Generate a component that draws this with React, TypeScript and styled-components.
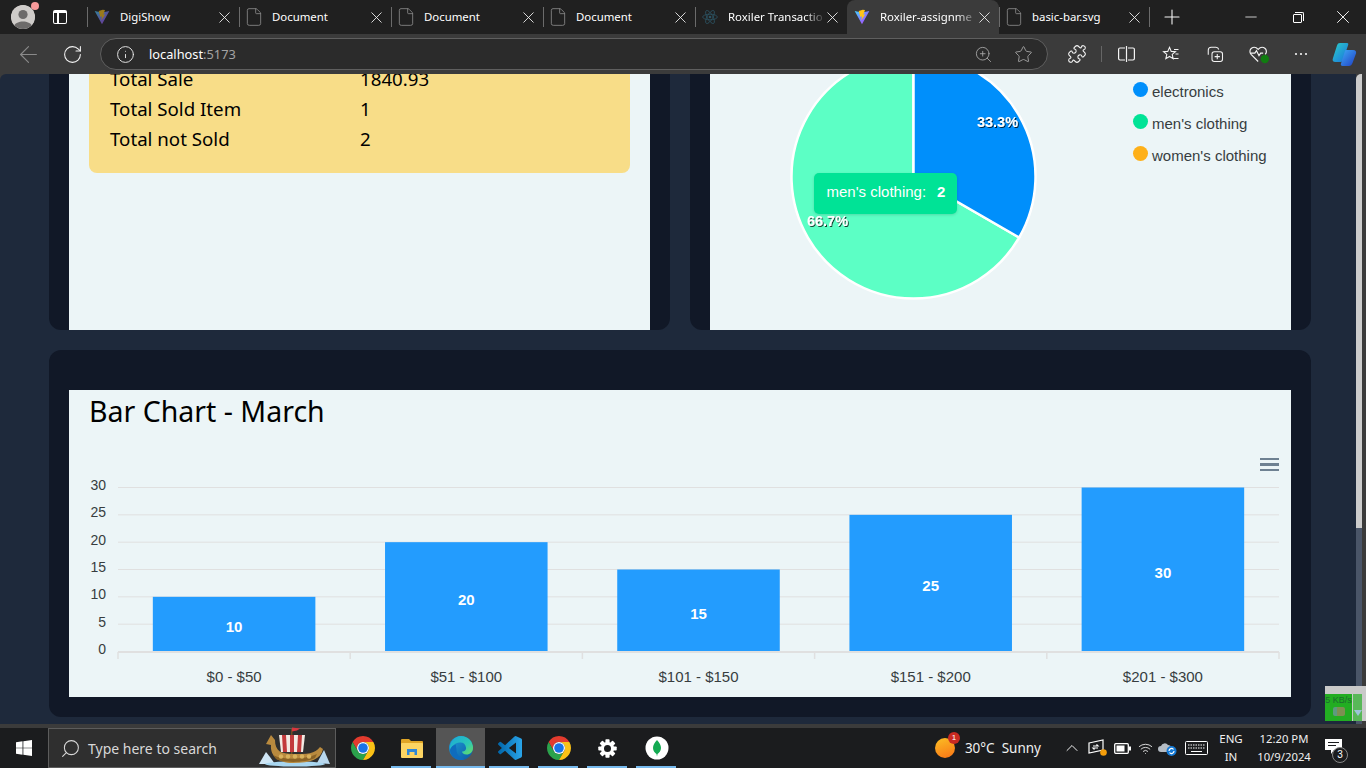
import React from "react";
import styled, { createGlobalStyle } from "styled-components";
import {
  ArrowLeft,
  ChevronUp,
  File,
  Info,
  Minus,
  Plus,
  Puzzle,
  RotateCw,
  Search,
  Star,
  Wifi,
  X,
  ZoomIn,
} from "lucide-react";

const UI_FONT = `"Noto Sans", "Open Sans", sans-serif`;
const CHART_FONT = `"Liberation Sans", Arial, sans-serif`;

const GlobalStyle = createGlobalStyle`
  html, body {
    margin: 0;
    height: 100%;
    overflow: hidden;
    background: #3b3b3b;
  }
  * { box-sizing: border-box; }
`;

const Screen = styled.div`
  position: relative;
  width: 1366px;
  height: 768px;
  display: flex;
  flex-direction: column;
  overflow: hidden;
  font-family: ${UI_FONT};
`;

/* ---- browser chrome ---- */

const TabStrip = styled.div`
  height: 34px;
  display: flex;
  align-items: center;
  background: #202020;
  color: #fff;
`;

const Avatar = styled.div`
  position: relative;
  width: 24px;
  height: 24px;
  margin-left: 11px;
  border-radius: 50%;
  background: #c9c6c3;
  overflow: visible;

  svg {
    display: block;
    border-radius: 50%;
  }
`;

const AvatarDot = styled.span`
  position: absolute;
  top: -3px;
  right: -4px;
  width: 8px;
  height: 8px;
  border-radius: 50%;
  background: #f79a9a;
`;

const VerticalTabsIcon = styled.div`
  width: 14px;
  height: 14px;
  margin-left: 18px;
  margin-right: 20px;
  border: 1.5px solid #fff;
  border-radius: 2px;
  border-top-width: 3px;
  position: relative;

  &::after {
    content: "";
    position: absolute;
    left: 3px;
    top: 0;
    bottom: 0;
    width: 1.5px;
    background: #fff;
  }
`;

const Tab = styled.div<{ $active?: boolean; $width?: number }>`
  position: relative;
  width: ${(p) => p.$width ?? 152}px;
  height: 34px;
  flex: none;
  display: flex;
  align-items: center;
  padding: 0 8px 0 7px;
  background: ${(p) => (p.$active ? "#3b3b3b" : "transparent")};
  border-radius: ${(p) => (p.$active ? "8px 8px 0 0" : "0")};

  &::before {
    content: "";
    display: ${(p) => (p.$active ? "none" : "block")};
    position: absolute;
    left: 0;
    top: 7px;
    bottom: 7px;
    width: 1px;
    background: #6b6b6b;
  }
`;

const Favicon = styled.div`
  width: 16px;
  height: 16px;
  flex: none;
  display: flex;
  align-items: center;
  justify-content: center;
  color: #8c8c8c;

  svg {
    flex: none;
  }
`;

const TabTitle = styled.span<{ $fade?: boolean }>`
  flex: 1;
  margin-left: 10px;
  min-width: 0;
  font-size: 11.4px;
  line-height: 16px;
  white-space: nowrap;
  color: #fff;
  ${(p) =>
    p.$fade &&
    "mask-image: linear-gradient(to right, #000 78%, transparent 100%);"}
`;

const TabClose = styled(X)`
  flex: none;
  margin: 0 -3px;
  color: #f2f2f2;
`;

const NewTabDivider = styled.div`
  width: 1px;
  height: 20px;
  background: #6b6b6b;
`;

const WindowControls = styled.div`
  margin-left: auto;
  display: flex;
  align-items: center;
`;

const WindowControl = styled.div`
  width: 46px;
  display: flex;
  align-items: center;
  justify-content: center;
`;

const RestoreIcon = styled.div`
  position: relative;
  width: 9px;
  height: 9px;
  border: 1px solid #fff;
  border-radius: 1px;
  margin-top: 2px;

  &::after {
    content: "";
    position: absolute;
    top: -3px;
    right: -3px;
    width: 8px;
    height: 8px;
    border-top: 1px solid #fff;
    border-right: 1px solid #fff;
    border-radius: 0 2px 0 0;
  }
`;

const Toolbar = styled.div`
  height: 40px;
  display: flex;
  align-items: center;
  background: #3b3b3b;
  color: #fff;
`;

const ToolButton = styled.div<{ $width: number; $dim?: boolean }>`
  width: ${(p) => p.$width}px;
  flex: none;
  display: flex;
  align-items: center;
  justify-content: center;
  color: ${(p) => (p.$dim ? "#8a8a8a" : "#f4f4f4")};
`;

const AddressBar = styled.div`
  width: 948px;
  height: 32px;
  flex: none;
  display: flex;
  align-items: center;
  margin: 0 8px 0 12px;
  padding: 0 14px 0 15px;
  border: 1px solid #5f5f5f;
  border-radius: 16px;
  background: #2b2b2b;
  color: #e8e8e8;
`;

const Host = styled.span`
  margin-left: 14px;
  font-size: 12.8px;
  color: #fff;
`;

const Port = styled.span`
  color: #a3a3a3;
`;

const AddressActions = styled.div`
  margin-left: auto;
  display: flex;
  align-items: center;
  gap: 21px;
  color: #a8a8a8;
`;

const ToolDivider = styled.div`
  width: 1px;
  height: 16px;
  margin-left: 3px;
  background: #666;
  flex: none;
`;

/* ---- page ---- */

const Viewport = styled.div`
  height: 650px;
  display: flex;
  background: #3b3b3b;
  overflow: hidden;
`;

const Page = styled.main`
  width: 1356px;
  padding: 0 45px 7px 49px;
  display: flex;
  flex-direction: column;
  gap: 20px;
  background: #1e293b;
  border-top-left-radius: 6px;
  overflow: hidden;
`;

const TopRow = styled.div`
  height: 256px;
  display: grid;
  grid-template-columns: 621px 621px;
  gap: 20px;
`;

const Panel = styled.section<{ $clipped?: boolean }>`
  padding: ${(p) => (p.$clipped ? "0 20px" : "40px 20px 20px")};
  background: #111827;
  border-radius: ${(p) => (p.$clipped ? "0 0 12px 12px" : "12px")};
`;

const PanelBody = styled.div`
  position: relative;
  height: 100%;
  background: #ecf5f7;
  overflow: hidden;
`;

const StatsCard = styled.div`
  margin: -10px 20px 0;
  padding: 0 21px 19px;
  background: #f8dd88;
  border-radius: 0 0 8px 8px;
  color: #000;
  font-size: 18.7px;
`;

const StatRow = styled.div`
  display: grid;
  grid-template-columns: 250px 1fr;
  height: 30px;
  line-height: 30px;
`;

const PieLayout = styled.div`
  display: flex;
  height: 100%;
`;

const PieBox = styled.div`
  position: relative;
  margin-left: 80px;
  width: 248px;
  height: 100%;
`;

const PieTooltip = styled.div`
  position: absolute;
  left: 24px;
  top: 99px;
  width: 143px;
  height: 41px;
  display: flex;
  align-items: center;
  padding: 0 0 4px 12.5px;
  border-radius: 5px;
  background: #00e396;
  color: #fff;
  font: 15px ${CHART_FONT};
  box-shadow: 0 1px 3px rgba(0, 0, 0, 0.15);

  b {
    margin-left: 11px;
  }
`;

const Legend = styled.ul`
  margin: 0 0 0 95px;
  padding: 1px 0 0;
  list-style: none;
`;

const LegendItem = styled.li`
  height: 32px;
  display: flex;
  align-items: center;
  font: 15px ${CHART_FONT};
  color: #373d3f;
`;

const LegendDot = styled.span<{ $color: string }>`
  width: 15px;
  height: 15px;
  margin-right: 4px;
  margin-top: -3px;
  border-radius: 50%;
  background: ${(p) => p.$color};
`;

const ChartTitle = styled.h2`
  margin: 0;
  padding: 0 0 3px 20px;
  height: 45px;
  line-height: 42px;
  font-size: 28.5px;
  font-weight: 400;
  color: #000;
`;

const ChartMenu = styled.div`
  position: absolute;
  right: 12px;
  top: 68px;
  width: 19px;
  height: 13px;
  border-top: 2.5px solid #6e8192;
  border-bottom: 2.5px solid #6e8192;

  &::after {
    content: "";
    display: block;
    height: 2.5px;
    margin-top: 3px;
    background: #6e8192;
  }
`;

const ChartSvg = styled.svg`
  display: block;
  font-family: ${CHART_FONT};
`;

/* ---- scrollbar + floating speed widget ---- */

const ScrollRail = styled.div`
  width: 6px;
  display: flex;
  flex-direction: column;
  background: #cccccc;
  border-top-left-radius: 5px;
`;

const ScrollThumb = styled.div`
  margin-top: 454px;
  flex: 1;
  background: #4a5568;
`;

const SpeedWidget = styled.div`
  position: absolute;
  left: 1325px;
  top: 686px;
  width: 41px;
  height: 35px;
  display: flex;
  background: #c9c9c9;
  overflow: hidden;
`;

const SpeedMain = styled.div`
  width: 27px;
  margin-top: 8px;
  background: #22ad22;
  color: #1c6b2e;
  font: 9px/12px ${CHART_FONT};
  white-space: nowrap;
  text-align: center;
  display: flex;
  flex-direction: column;
  align-items: center;
`;

const SpeedGlyph = styled.span`
  width: 12px;
  height: 9px;
  margin-top: 1px;
  border-radius: 2px;
  background: #7d8f52;
  border-left: 4px solid #5d9a7f;
`;

const SpeedSide = styled.div`
  width: 9px;
  margin: 8px 0 0 1px;
  background: #58b858;
  position: relative;

  &::after {
    content: "";
    position: absolute;
    left: 1px;
    bottom: 5px;
    border-left: 4px solid transparent;
    border-right: 4px solid transparent;
    border-top: 6px solid #9cc4d8;
  }
`;

/* ---- taskbar ---- */

const Seam = styled.div`
  height: 4px;
  background: #3b3b3b;
`;

const Taskbar = styled.footer`
  height: 40px;
  display: flex;
  align-items: stretch;
  background: #1b1c1e;
  color: #f0f0f0;
`;

const StartButton = styled.div`
  width: 48px;
  display: flex;
  align-items: center;
  justify-content: center;
`;

const SearchBox = styled.div`
  position: relative;
  width: 288px;
  display: flex;
  align-items: center;
  padding-left: 11px;
  background: #2f2f2f;
  border: 1px solid #5c5c5c;
  color: #d8d8d8;
  font-size: 14px;

  span {
    margin-left: 7px;
  }
`;

const SearchGlass = styled(Search)`
  transform: scaleX(-1);
`;

const ShipDoodle = styled.svg`
  position: absolute;
  right: 4px;
  bottom: 0;
`;

const TaskIcons = styled.div`
  display: flex;
  margin-left: 2px;
`;

const TaskIcon = styled.div<{ $active?: boolean; $open?: boolean }>`
  position: relative;
  width: 49px;
  display: flex;
  align-items: center;
  justify-content: center;
  background: ${(p) => (p.$active ? "#555" : "transparent")};

  &::after {
    content: "";
    display: ${(p) => (p.$open ? "block" : "none")};
    position: absolute;
    bottom: 0;
    left: ${(p) => (p.$active ? "0" : "4px")};
    right: ${(p) => (p.$active ? "0" : "5px")};
    height: 2px;
    background: #76b9ed;
  }
`;

const Tray = styled.div`
  margin-left: auto;
  display: flex;
  align-items: center;
  font-size: 13.5px;
`;

const Weather = styled.div`
  position: relative;
  width: 20px;
  height: 20px;
  margin-right: 10px;
  border-radius: 50%;
  background: linear-gradient(160deg, #fbbf24, #f97316);

  b {
    position: absolute;
    top: -6px;
    right: -5px;
    width: 12px;
    height: 12px;
    border-radius: 50%;
    background: #c92a22;
    color: #fff;
    font: 8px/12px ${CHART_FONT};
    text-align: center;
  }
`;

const WeatherText = styled.span`
  margin-right: 17px;
`;

const TrayIcon = styled.div<{ $width: number }>`
  width: ${(p) => p.$width}px;
  display: flex;
  align-items: center;
  justify-content: center;
  color: #f0f0f0;
`;

const TrayText = styled.div<{ $width: number; $size: number }>`
  width: ${(p) => p.$width}px;
  text-align: center;
  font-size: ${(p) => p.$size}px;
  line-height: 18px;
`;

const Notification = styled.div`
  position: relative;
  width: 48px;
  height: 100%;
  display: flex;
  align-items: center;
  padding: 0 0 3px 7px;
`;

const NotificationCount = styled.span`
  position: absolute;
  left: 14px;
  top: 19px;
  width: 16px;
  height: 16px;
  border-radius: 50%;
  border: 1px solid #888;
  background: #1b1c1e;
  color: #fff;
  font: 10px/14px ${CHART_FONT};
  text-align: center;
`;

/* ---- drawn icons ---- */

const ViteIcon = ({ dim }: { dim?: boolean }) => (
  <svg width="16" height="16" viewBox="0 0 24 24" opacity={dim ? 0.55 : 1}>
    <defs>
      <linearGradient id={dim ? "vd" : "va"} x1="0" y1="0" x2="1" y2="1">
        <stop offset="0" stopColor="#41d1ff" />
        <stop offset="1" stopColor="#bd34fe" />
      </linearGradient>
    </defs>
    <path d="M1 3 L12 23 L23 3 L16 4.5 L8 4.5 Z" fill={`url(#${dim ? "vd" : "va"})`} />
    <path d="M13 1 L7 3 L9.5 12 L12 11 L11 17 L17 8 L14 8.5 L16.5 1.5 Z" fill="#ffc517" />
  </svg>
);

const ReactIcon = () => (
  <svg width="16" height="16" viewBox="-12 -12 24 24" fill="none" stroke="#2c5363" strokeWidth="1.2">
    <circle r="2" fill="#2c5363" stroke="none" />
    <ellipse rx="11" ry="4.2" />
    <ellipse rx="11" ry="4.2" transform="rotate(60)" />
    <ellipse rx="11" ry="4.2" transform="rotate(120)" />
  </svg>
);

const PersonAvatar = () => (
  <svg width="24" height="24" viewBox="0 0 24 24">
    <circle cx="12" cy="12" r="12" fill="#cfccc9" />
    <circle cx="12" cy="9.5" r="4.6" fill="#6d6b6a" />
    <path d="M3 21 C5 15 19 15 21 21 L16 24 H8Z" fill="#6d6b6a" />
  </svg>
);

const SplitIcon = () => (
  <svg width="17" height="18" viewBox="0 0 17 18" fill="none" stroke="currentColor" strokeWidth="1.2">
    <path d="M7 3H2a1.4 1.4 0 0 0-1.4 1.4v9.2A1.4 1.4 0 0 0 2 15h5M10 3h5a1.4 1.4 0 0 1 1.4 1.4v9.2A1.4 1.4 0 0 1 15 15h-5M8.5 1v16" />
  </svg>
);

const FavoritesIcon = () => (
  <svg width="18" height="18" viewBox="0 0 24 24" fill="none" stroke="currentColor" strokeWidth="1.4">
    <path d="M10 3l2.3 5.5 5.7.4-4.4 3.7 1.3 5.6L10 15.3 5.1 18.2l1.3-5.6L2 8.9l5.7-.4z" />
    <path d="M16 6h6M18 12h4M15 18h7" />
  </svg>
);

const CollectionsIcon = () => (
  <svg width="18" height="18" viewBox="0 0 24 24" fill="none" stroke="currentColor" strokeWidth="1.4">
    <path d="M3 13V7a4 4 0 0 1 4-4h6a4 4 0 0 1 4 3" />
    <rect x="8" y="9" width="14" height="13" rx="3" />
    <path d="M15 12v7M11.5 15.5h7" />
  </svg>
);

const HealthIcon = () => (
  <svg width="22" height="20" viewBox="0 0 26 24" fill="none" stroke="currentColor" strokeWidth="1.4">
    <path d="M12 21 3.5 12.5C-1 7 6.5 0.5 12 6.5 17.5 0.5 25 7 20.5 12.5" />
    <path d="M3 11h5l2-3 3 6 2-3h3" />
    <circle cx="20" cy="18" r="5" fill="#107c10" stroke="none" />
  </svg>
);

const MoreIcon = () => (
  <svg width="14" height="4" viewBox="0 0 14 4" fill="currentColor">
    <circle cx="2" cy="2" r="1.1" />
    <circle cx="7" cy="2" r="1.1" />
    <circle cx="12" cy="2" r="1.1" />
  </svg>
);

const CopilotIcon = () => (
  <svg width="25" height="25" viewBox="0 0 25 25">
    <defs>
      <linearGradient id="cp1" x1="0" y1="0" x2="1" y2="1">
        <stop offset="0" stopColor="#2bd0c6" />
        <stop offset="1" stopColor="#1a6fe0" />
      </linearGradient>
      <linearGradient id="cp2" x1="0" y1="0" x2="1" y2="1">
        <stop offset="0" stopColor="#3fa9f5" />
        <stop offset="1" stopColor="#1f3fc4" />
      </linearGradient>
    </defs>
    <path d="M8 1h7c1.500 0 1.500 1 1 2.500L11 18c-.5 1.500-1.500 2-3 2H3.500C1 20 0 18.500 1 16L5 3.500C5.500 1.800 6.500 1 8 1z" fill="url(#cp1)" />
    <path d="M14 8h7c2.500 0 3.500 1.500 3 3.500l-3.500 9.500c-.7 2-2 3-3.500 3h-6.500c-1.500 0-2-1-1.500-2.500L13 9c.2-.7.500-1 1-1z" fill="url(#cp2)" />
  </svg>
);

const WindowsIcon = () => (
  <svg width="16" height="16" viewBox="0 0 24 24" fill="#fff">
    <path d="M0 3.4 9.8 2v9.500H0zM11 1.800 24 0v11.500H11zM0 12.500h9.800V22L0 20.600zM11 12.500h13V24l-13-1.800z" />
  </svg>
);

const ChromeIcon = () => (
  <svg width="24" height="24" viewBox="0 0 24 24">
    <g transform="translate(-2.400 -2.400) scale(1.2)">
      <path d="M12 2A10 10 0 0 1 20.660 7H12A5 5 0 0 0 7.670 14.500L3.340 7A10 10 0 0 1 12 2Z" fill="#e33b2e" />
      <path d="M3.340 7 7.670 14.500A5 5 0 0 0 16.330 14.500L12 22A10 10 0 0 1 3.340 7Z" fill="#2ba24c" />
      <path d="M20.660 7H12A5 5 0 0 1 16.330 14.500L12 22A10 10 0 0 0 20.660 7Z" fill="#fbc116" />
      <circle cx="12" cy="12" r="5" fill="#fff" />
      <circle cx="12" cy="12" r="4" fill="#1a73e8" />
    </g>
  </svg>
);

const FolderIcon = () => (
  <svg width="22" height="20" viewBox="0 0 22 20">
    <path d="M0 2a1 1 0 0 1 1-1h7l2 2h11a1 1 0 0 1 1 1v3H0z" fill="#e0a526" />
    <rect y="5" width="22" height="15" rx="1" fill="#fcd462" />
    <path d="M6 11h10v6h-2.500v-3h-5v3H6z" fill="#2f86d6" />
  </svg>
);

const EdgeIcon = () => (
  <svg width="24" height="24" viewBox="0 0 24 24">
    <defs>
      <linearGradient id="eg1" x1="0" y1="0" x2="1" y2="1">
        <stop offset="0" stopColor="#1f9fd8" />
        <stop offset="1" stopColor="#0c59a4" />
      </linearGradient>
      <linearGradient id="eg2" x1="0" y1="0" x2="1" y2="1">
        <stop offset="0" stopColor="#1aa7dd" />
        <stop offset="0.6" stopColor="#2cc8b4" />
        <stop offset="1" stopColor="#6fdc5c" />
      </linearGradient>
    </defs>
    <circle cx="12" cy="12" r="12" fill="url(#eg1)" />
    <path d="M12 0a12 12 0 0 1 12 12c0 4-3 6.500-6.500 6.500-3 0-4.500-1.500-4.500-3 2.500 0 4.500-1.500 4-4C16.500 8 14 6 10.500 6.500 6 7 2.500 10 1 14 0 6.500 5.500 0 12 0z" fill="url(#eg2)" />
    <path d="M7.500 14c0 4.500 4 8.500 8.500 9-1.300.6-2.700 1-4 1C6 24 1.500 20 1 14c1-3 3-5 6-5.500C6.500 10.500 7.500 12 7.500 14z" fill="#0f6cbd" />
  </svg>
);

const VsCodeIcon = () => (
  <svg width="24" height="24" viewBox="0 0 24 24">
    <defs>
      <linearGradient id="vs" x1="0" y1="0" x2="1" y2="0">
        <stop offset="0" stopColor="#0065a9" />
        <stop offset="1" stopColor="#2aa5ea" />
      </linearGradient>
    </defs>
    <path
      fill="url(#vs)"
      d="M23.150 2.587L18.210.21a1.494 1.494 0 0 0-1.705.29l-9.460 8.630-4.120-3.128a.999.999 0 0 0-1.276.057L.327 7.261A1 1 0 0 0 .326 8.740L3.899 12 .326 15.260a1 1 0 0 0 .001 1.479L1.650 17.940a.999.999 0 0 0 1.276.057l4.120-3.128 9.460 8.630a1.492 1.492 0 0 0 1.704.29l4.942-2.377A1.500 1.500 0 0 0 24 20.060V3.939a1.500 1.500 0 0 0-.850-1.352zm-5.146 14.861L10.826 12l7.178-5.448v10.896z"
    />
  </svg>
);

const GearIcon = () => (
  <svg width="19" height="19" viewBox="0 0 20 20">
    <g fill="#fff">
      {[0, 45, 90, 135, 180, 225, 270, 315].map((a) => (
        <rect key={a} x="7.800" y="0.300" width="4.400" height="5" rx="0.800" transform={`rotate(${a} 10 10)`} />
      ))}
    </g>
    <circle cx="10" cy="10" r="5.300" fill="none" stroke="#fff" strokeWidth="3.200" />
  </svg>
);

const MongoIcon = () => (
  <svg width="24" height="24" viewBox="0 0 24 24">
    <circle cx="12" cy="12" r="11.500" fill="#fff" />
    <path d="M12 4c2.500 3 4 5 4 8 0 3-2 5-3.500 6l-.5 2.500-.5-2.500C10 17 8 15 8 12c0-3 1.500-5 4-8z" fill="#13aa52" />
  </svg>
);

const VikingShip = () => (
  <ShipDoodle width="72" height="40" viewBox="0 0 72 40">
    <path d="M0 37 L7 25 L11 30 L16 37Z" fill="#cfe6f5" />
    <path d="M58 36 L65 23 L71 37Z" fill="#b9d8ee" />
    <ellipse cx="36" cy="37" rx="30" ry="2.600" fill="#a8d6f0" />
    <rect x="32" y="2" width="1.500" height="30" fill="#6e4a22" />
    <path d="M33 0.500 L41 1.500 L38 3.500 L33 4.500Z" fill="#d9363e" />
    <path d="M20 8 H46 L44 25 H22Z" fill="#f3ebe4" />
    <path d="M23 8h4l1 17h-4zM31 8h4v17h-4zM39 8h4l-1 17h-4z" fill="#c23a3c" />
    <path d="M7 17 L12 8 L16 13 C16 24 22 27 34 27 C48 27 56 27 61 20 L64 22 C62 32 52 36 34 36 C18 36 11 28 12 18Z" fill="#b98a3e" />
    <path d="M14 28 C22 33 46 33 58 27 L56 31 C46 36 24 36 17 32Z" fill="#8a6326" />
    <g fill="#d8b25c">
      {[22, 29, 36, 43, 50].map((x) => (
        <circle key={x} cx={x} cy="29.500" r="2.200" />
      ))}
    </g>
  </ShipDoodle>
);

const BatteryIcon = () => (
  <svg width="17" height="11" viewBox="0 0 17 11" fill="none">
    <rect x="0.700" y="0.700" width="13.600" height="9.600" rx="1" stroke="#fff" strokeWidth="1.300" />
    <rect x="2.500" y="2.500" width="8" height="6" fill="#fff" />
    <rect x="15" y="3.500" width="2" height="4" fill="#fff" />
  </svg>
);

const MonitorIcon = () => (
  <svg width="20" height="20" viewBox="0 0 20 20" fill="none" stroke="#fff" strokeWidth="1.200">
    <path d="M1 5 15 2v10L1 15z" />
    <path d="M5 8h5l-1.500-1.500M10 10H5l1.500 1.500" />
    <circle cx="15.500" cy="14.500" r="3.300" fill="#f59e0b" stroke="none" />
  </svg>
);

const CloudSyncIcon = () => (
  <svg width="20" height="18" viewBox="0 0 20 18">
    <path d="M3 13a3 3 0 0 1 0-6 4 4 0 0 1 7-1 3 3 0 0 1 3 3v4z" fill="#b5bcc4" />
    <circle cx="13.500" cy="12" r="5" fill="#1479d4" />
    <path d="M11 12a2.500 2.500 0 0 1 4.500-1.500M16 12a2.500 2.500 0 0 1-4.500 1.500" fill="none" stroke="#fff" strokeWidth="1.200" />
  </svg>
);

const KeyboardIcon = () => (
  <svg width="23" height="14" viewBox="0 0 23 14" fill="none" stroke="#fff">
    <rect x="0.500" y="0.500" width="22" height="13" rx="1" />
    <path d="M3 4h17M3 7h17" strokeDasharray="1.500 1" />
    <path d="M6 10.500h11" />
  </svg>
);

const BubbleIcon = () => (
  <svg width="17" height="15" viewBox="0 0 17 15">
    <path d="M0 0h17v11H9l-3 4v-4H0z" fill="#fff" />
    <path d="M3 3.500h11M3 6.500h8" stroke="#1b1c1e" />
  </svg>
);

/* ---- charts ---- */

const polar = (cx: number, cy: number, r: number, fraction: number) => {
  const angle = fraction * 2 * Math.PI - Math.PI / 2;
  return [cx + r * Math.cos(angle), cy + r * Math.sin(angle)];
};

const slicePath = (cx: number, cy: number, r: number, from: number, to: number) => {
  const [x1, y1] = polar(cx, cy, r, from);
  const [x2, y2] = polar(cx, cy, r, to);
  const large = to - from > 0.5 ? 1 : 0;
  return `M${cx} ${cy}L${x1} ${y1}A${r} ${r} 0 ${large} 1 ${x2} ${y2}Z`;
};

const PieChart = () => {
  const cx = 123.5;
  const cy = 102.5;
  const r = 122;
  return (
    <PieBox>
      <ChartSvg width="248" height="256" viewBox="0 0 248 256">
        <defs>
          <filter id="labelShadow" x="-20%" y="-20%" width="140%" height="140%">
            <feDropShadow dx="1" dy="1" stdDeviation="0.700" floodColor="#000" floodOpacity="0.750" />
          </filter>
        </defs>
        <path d={slicePath(cx, cy, r, 1 / 3, 1)} fill="#5cffc5" stroke="#fff" strokeWidth="2.500" />
        <path d={slicePath(cx, cy, r, 0, 1 / 3)} fill="#008ffb" stroke="#fff" strokeWidth="2.500" />
        <text x="207.500" y="52.500" textAnchor="middle" fontSize="14.500" fontWeight="700" fill="#fff" filter="url(#labelShadow)">
          33.3%
        </text>
        <text x="37.500" y="151.500" textAnchor="middle" fontSize="14.500" fontWeight="700" fill="#fff" filter="url(#labelShadow)">
          66.7%
        </text>
      </ChartSvg>
      <PieTooltip>
        men's clothing: <b>2</b>
      </PieTooltip>
    </PieBox>
  );
};

const buckets = [
  { label: "$0 - $50", value: 10 },
  { label: "$51 - $100", value: 20 },
  { label: "$101 - $150", value: 15 },
  { label: "$151 - $200", value: 25 },
  { label: "$201 - $300", value: 30 },
];

const BarChart = () => {
  const left = 49;
  const plotWidth = 1161;
  const top = 52.5;
  const bottom = 216.5;
  const step = plotWidth / buckets.length;
  const barWidth = step * 0.7;
  const y = (v: number) => bottom - ((bottom - top) * v) / 30;
  return (
    <ChartSvg width="1222" height="262" viewBox="0 0 1222 262">
      {[0, 5, 10, 15, 20, 25, 30].map((v) => (
        <g key={v}>
          <line x1={left} x2={left + plotWidth} y1={y(v)} y2={y(v)} stroke="#e0e0e0" />
          <text x="37" y={y(v) + 2.5} textAnchor="end" fontSize="14" fill="#373d3f">
            {v}
          </text>
        </g>
      ))}
      {buckets.map((b, i) => (
        <g key={b.label}>
          <rect x={left + i * step + (step - barWidth) / 2} y={y(b.value)} width={barWidth} height={bottom - y(b.value)} fill="#239cfe" />
          <text
            x={left + i * step + step / 2}
            y={(y(b.value) + bottom) / 2 + 8.2}
            textAnchor="middle"
            fontSize="15"
            fontWeight="700"
            fill="#fff"
          >
            {b.value}
          </text>
          <text x={left + i * step + step / 2} y="247" textAnchor="middle" fontSize="15" fill="#373d3f">
            {b.label}
          </text>
        </g>
      ))}
      <line x1={left} x2={left + plotWidth} y1="217" y2="217" stroke="#e0e0e0" strokeWidth="2" />
      {[0, 1, 2, 3, 4, 5].map((i) => (
        <line key={i} x1={left + i * step} x2={left + i * step} y1="217" y2="224" stroke="#e0e0e0" strokeWidth="1.500" />
      ))}
    </ChartSvg>
  );
};

/* ---- page data ---- */

const fileIcon = <File size={20} strokeWidth={1} />;

const tabs: { title: string; icon: React.ReactNode; active?: boolean; fade?: boolean; width?: number }[] = [
  { title: "DigiShow", icon: <ViteIcon dim /> },
  { title: "Document", icon: fileIcon },
  { title: "Document", icon: fileIcon },
  { title: "Document", icon: fileIcon },
  { title: "Roxiler Transactio", icon: <ReactIcon />, fade: true },
  { title: "Roxiler-assignme", icon: <ViteIcon />, active: true, fade: true },
  { title: "basic-bar.svg", icon: fileIcon, width: 150 },
];

const stats = [
  ["Total Sale", "1840.93"],
  ["Total Sold Item", "1"],
  ["Total not Sold", "2"],
];

const legend = [
  { label: "electronics", color: "#008ffb" },
  { label: "men's clothing", color: "#00e396" },
  { label: "women's clothing", color: "#feb019" },
];

export default function App() {
  return (
    <Screen>
      <GlobalStyle />
      <TabStrip>
        <Avatar>
          <PersonAvatar />
          <AvatarDot />
        </Avatar>
        <VerticalTabsIcon />
        {tabs.map((t, i) => (
          <Tab key={i} $active={t.active} $width={t.width}>
            <Favicon>{t.icon}</Favicon>
            <TabTitle $fade={t.fade}>{t.title}</TabTitle>
            <TabClose size={19} strokeWidth={1.1} />
          </Tab>
        ))}
        <NewTabDivider />
        <ToolButton $width={44}>
          <Plus size={24} strokeWidth={1.1} />
        </ToolButton>
        <WindowControls>
          <WindowControl>
            <Minus size={18} strokeWidth={1} />
          </WindowControl>
          <WindowControl>
            <RestoreIcon />
          </WindowControl>
          <WindowControl>
            <X size={22} strokeWidth={1} />
          </WindowControl>
        </WindowControls>
      </TabStrip>

      <Toolbar>
        <ToolButton $width={56} $dim>
          <ArrowLeft size={27} strokeWidth={1} />
        </ToolButton>
        <ToolButton $width={32}>
          <RotateCw size={21} strokeWidth={1.2} />
        </ToolButton>
        <AddressBar>
          <Info size={19} strokeWidth={1.2} />
          <Host>
            localhost<Port>:5173</Port>
          </Host>
          <AddressActions>
            <ZoomIn size={19} strokeWidth={1.1} />
            <Star size={19} strokeWidth={1.1} />
          </AddressActions>
        </AddressBar>
        <ToolButton $width={42}>
          <Puzzle size={20} strokeWidth={1.3} />
        </ToolButton>
        <ToolDivider />
        <ToolButton $width={48}>
          <SplitIcon />
        </ToolButton>
        <ToolButton $width={42}>
          <FavoritesIcon />
        </ToolButton>
        <ToolButton $width={46}>
          <CollectionsIcon />
        </ToolButton>
        <ToolButton $width={42}>
          <HealthIcon />
        </ToolButton>
        <ToolButton $width={42}>
          <MoreIcon />
        </ToolButton>
        <ToolButton $width={44}>
          <CopilotIcon />
        </ToolButton>
      </Toolbar>

      <Viewport>
        <Page>
          <TopRow>
            <Panel $clipped>
              <PanelBody>
                <StatsCard>
                  {stats.map(([label, value]) => (
                    <StatRow key={label}>
                      <span>{label}</span>
                      <span>{value}</span>
                    </StatRow>
                  ))}
                </StatsCard>
              </PanelBody>
            </Panel>
            <Panel $clipped>
              <PanelBody>
                <PieLayout>
                  <PieChart />
                  <Legend>
                    {legend.map((l) => (
                      <LegendItem key={l.label}>
                        <LegendDot $color={l.color} />
                        {l.label}
                      </LegendItem>
                    ))}
                  </Legend>
                </PieLayout>
              </PanelBody>
            </Panel>
          </TopRow>
          <Panel>
            <PanelBody>
              <ChartTitle>Bar Chart - March</ChartTitle>
              <ChartMenu />
              <BarChart />
            </PanelBody>
          </Panel>
        </Page>
        <ScrollRail>
          <ScrollThumb />
        </ScrollRail>
      </Viewport>
      <Seam />

      <Taskbar>
        <StartButton>
          <WindowsIcon />
        </StartButton>
        <SearchBox>
          <SearchGlass size={21} strokeWidth={1.2} />
          <span>Type here to search</span>
          <VikingShip />
        </SearchBox>
        <TaskIcons>
          <TaskIcon>
            <ChromeIcon />
          </TaskIcon>
          <TaskIcon $open>
            <FolderIcon />
          </TaskIcon>
          <TaskIcon $open $active>
            <EdgeIcon />
          </TaskIcon>
          <TaskIcon $open>
            <VsCodeIcon />
          </TaskIcon>
          <TaskIcon $open>
            <ChromeIcon />
          </TaskIcon>
          <TaskIcon $open>
            <GearIcon />
          </TaskIcon>
          <TaskIcon $open>
            <MongoIcon />
          </TaskIcon>
        </TaskIcons>
        <Tray>
          <Weather>
            <b>1</b>
          </Weather>
          <WeatherText>30°C&nbsp;&nbsp;Sunny</WeatherText>
          <TrayIcon $width={28}>
            <ChevronUp size={20} strokeWidth={1.2} />
          </TrayIcon>
          <TrayIcon $width={24}>
            <MonitorIcon />
          </TrayIcon>
          <TrayIcon $width={24}>
            <BatteryIcon />
          </TrayIcon>
          <TrayIcon $width={22}>
            <Wifi size={15} strokeWidth={1.4} />
          </TrayIcon>
          <TrayIcon $width={24}>
            <CloudSyncIcon />
          </TrayIcon>
          <TrayIcon $width={32}>
            <KeyboardIcon />
          </TrayIcon>
          <TrayText $width={38} $size={11.5}>
            ENG
            <br />
            IN
          </TrayText>
          <TrayText $width={68} $size={11.3}>
            12:20 PM
            <br />
            10/9/2024
          </TrayText>
          <Notification>
            <BubbleIcon />
            <NotificationCount>3</NotificationCount>
          </Notification>
        </Tray>
      </Taskbar>

      <SpeedWidget>
        <SpeedMain>
          5 KB/s
          <SpeedGlyph />
        </SpeedMain>
        <SpeedSide />
      </SpeedWidget>
    </Screen>
  );
}
